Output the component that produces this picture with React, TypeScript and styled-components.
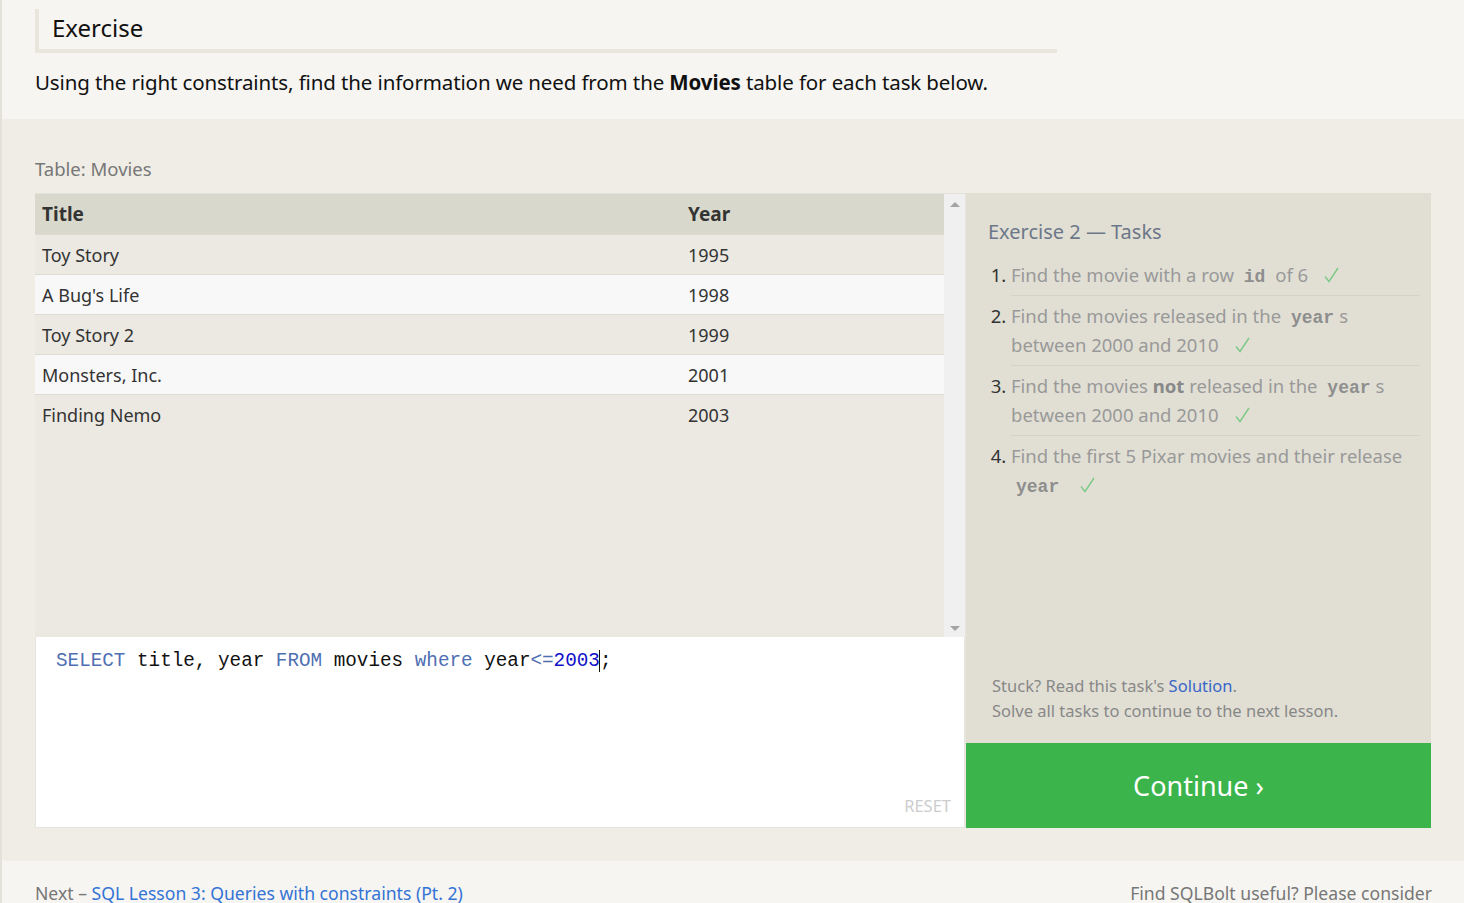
import React from 'react'
import styled, { createGlobalStyle } from 'styled-components'

const GlobalStyle = createGlobalStyle`
  html, body {
    margin: 0;
    padding: 0;
    background: #f6f5f1;
    font-family: "Noto Sans", "Open Sans", sans-serif;
    color: #111;
    overflow: hidden;
  }
`

const Page = styled.div`
  border-left: 2px solid #e4e0da;
  min-height: 903px;
  box-sizing: border-box;
`

const Intro = styled.section`
  padding: 9px 0 0 33px;
`

const HeaderBox = styled.div`
  width: 1022px;
  box-sizing: border-box;
  border-left: 4px solid #e9e7dd;
  border-bottom: 4px solid #e9e7dd;
  padding: 4px 0 6px 13px;
  font-size: 24px;
  line-height: 30px;
  color: #111;
`

const Lead = styled.p`
  margin: 14px 0 0;
  font-size: 20.5px;
  line-height: 30px;
  padding-bottom: 22px;
  letter-spacing: -0.12px;
  b {
    font-weight: 700;
  }
`

const ExerciseArea = styled.section`
  background: #efede6;
  border-bottom-left-radius: 4px;
  padding: 36px 0 33px 33px;
`

const TableLabel = styled.div`
  font-size: 18.5px;
  color: #777;
  line-height: 28px;
  margin-bottom: 10px;
`

const Workspace = styled.div`
  display: grid;
  grid-template-columns: 930px 466px;
  width: 1396px;
`

const LeftCol = styled.div`
  display: flex;
  flex-direction: column;
`

const TableWrap = styled.div`
  display: flex;
  height: 443px;
  background: #ebe9e2;
  border-top: 1px solid #e3e1da;
`

const TableScroll = styled.div`
  flex: 1;
  overflow: hidden;
`

const Table = styled.table`
  width: 100%;
  border-collapse: collapse;
  font-size: 18px;
  color: #333;
`

const HeadCell = styled.th`
  background: #d9d8cc;
  text-align: left;
  font-weight: 700;
  font-size: 19px;
  height: 40px;
  padding: 0 7px;
  color: #333;
`

const Row = styled.tr<{ $alt: boolean }>`
  background: ${p => (p.$alt ? '#f8f8f8' : '#ebe9e2')};
  border-top: 1px solid #dcdbd6;
`

const Cell = styled.td<{ $w?: string }>`
  height: 39px;
  padding: 0 7px;
  width: ${p => p.$w || 'auto'};
`

const Scrollbar = styled.div`
  width: 21px;
  background: #f0f0f0;
  display: flex;
  flex-direction: column;
  justify-content: space-between;
  align-items: center;
  padding: 8px 0 6px;
  box-sizing: border-box;
`

const Arrow = styled.div<{ $down?: boolean }>`
  width: 0;
  height: 0;
  border-left: 5px solid transparent;
  border-right: 5px solid transparent;
  ${p =>
    p.$down
      ? 'border-top: 5px solid #a3a3a3;'
      : 'border-bottom: 5px solid #a3a3a3;'}
`

const Editor = styled.div`
  height: 191px;
  background: #fff;
  border: 1px solid #e6e4de;
  border-top: none;
  box-sizing: border-box;
  display: flex;
  flex-direction: column;
  justify-content: space-between;
  padding: 11px 13px 10px 20px;
`

const Code = styled.div`
  font-family: "Liberation Mono", "DejaVu Sans Mono", monospace;
  font-size: 19.3px;
  line-height: 26px;
  color: #111;
  white-space: pre;
`

const Token = styled.span<{ $kind: 'kw' | 'num' | 'op' }>`
  color: ${p => (p.$kind === 'kw' ? '#4f6fb3' : p.$kind === 'num' ? '#1010c8' : '#4f6fb3')};
`

const Caret = styled.span`
  border-left: 1.5px solid #111;
  margin-left: -1px;
`

const Reset = styled.div`
  align-self: flex-end;
  font-size: 16.5px;
  color: #cdcdcd;
`

const RightCol = styled.div`
  display: flex;
  flex-direction: column;
  border-left: 1px solid #e8e6dd;
`

const TaskPanel = styled.div`
  flex: 1;
  background: #e1dfd4;
  padding: 24px 11px 20px 22px;
  display: flex;
  flex-direction: column;
  justify-content: space-between;
`

const TaskTitle = styled.h3`
  margin: 0 0 8px;
  font-weight: 400;
  font-size: 20px;
  line-height: 30px;
  color: #6c7789;
`

const TaskList = styled.ol`
  margin: 0;
  padding: 0 0 0 23px;
  font-size: 18.5px;
  line-height: 29.5px;
  color: #333;
`

const TaskItem = styled.li<{ $last?: boolean }>`
  padding: 5px 0 5px;
  border-bottom: ${p => (p.$last ? 'none' : '1px solid #d5d3c8')};
  span.t {
    color: #999;
  }
  b {
    color: #888;
  }
`

const Mono = styled.code`
  font-family: "Liberation Mono", "DejaVu Sans Mono", monospace;
  font-weight: 700;
  color: #8e8e8e;
  font-size: 18px;
  line-height: 1;
  padding: 0 5px;
`

const CheckMark = styled.svg`
  width: 15px;
  height: 16px;
  margin-left: 16px;
  vertical-align: -1px;
`

const Check = () => (
  <CheckMark viewBox="0 0 15 16">
    <path d="M1 9.5 L5 14.5 L14 1" fill="none" stroke="#7cc985" strokeWidth="1.4" />
  </CheckMark>
)

const Hint = styled.div`
  font-size: 16.5px;
  line-height: 25px;
  color: #888;
  padding-left: 4px;
  a {
    color: #3a66c8;
    text-decoration: none;
  }
`

const ContinueButton = styled.button`
  height: 85px;
  border: none;
  background: #3bb44b;
  color: #fff;
  font-family: "Noto Sans", "Open Sans", sans-serif;
  font-size: 27px;
  cursor: pointer;
  padding: 0;
`

const Footer = styled.footer`
  display: flex;
  justify-content: space-between;
  padding: 20px 32px 0 33px;
  font-size: 17.6px;
  color: #777;
  a {
    color: #3473d6;
    text-decoration: none;
  }
`

const movies = [
  { title: 'Toy Story', year: 1995 },
  { title: "A Bug's Life", year: 1998 },
  { title: 'Toy Story 2', year: 1999 },
  { title: 'Monsters, Inc.', year: 2001 },
  { title: 'Finding Nemo', year: 2003 },
]

export default function App() {
  return (
    <Page>
      <GlobalStyle />
      <Intro>
        <HeaderBox>Exercise</HeaderBox>
        <Lead>
          Using the right constraints, find the information we need from the <b>Movies</b> table
          for each task below.
        </Lead>
      </Intro>
      <ExerciseArea>
        <TableLabel>Table: Movies</TableLabel>
        <Workspace>
          <LeftCol>
            <TableWrap>
              <TableScroll>
                <Table>
                  <thead>
                    <tr>
                      <HeadCell>Title</HeadCell>
                      <HeadCell>Year</HeadCell>
                    </tr>
                  </thead>
                  <tbody>
                    {movies.map((m, i) => (
                      <Row key={m.title} $alt={i % 2 === 1}>
                        <Cell $w="632px">{m.title}</Cell>
                        <Cell>{m.year}</Cell>
                      </Row>
                    ))}
                  </tbody>
                </Table>
              </TableScroll>
              <Scrollbar>
                <Arrow />
                <Arrow $down />
              </Scrollbar>
            </TableWrap>
            <Editor>
              <Code>
                <Token $kind="kw">SELECT</Token> title, year <Token $kind="kw">FROM</Token> movies{' '}
                <Token $kind="kw">where</Token> year<Token $kind="op">&lt;=</Token>
                <Token $kind="num">2003</Token>
                <Caret />;
              </Code>
              <Reset>RESET</Reset>
            </Editor>
          </LeftCol>
          <RightCol>
            <TaskPanel>
              <div>
                <TaskTitle>Exercise 2 — Tasks</TaskTitle>
                <TaskList>
                  <TaskItem>
                    <span className="t">
                      Find the movie with a row <Mono>id</Mono> of 6
                      <Check />
                    </span>
                  </TaskItem>
                  <TaskItem>
                    <span className="t">
                      Find the movies released in the <Mono>year</Mono>s between 2000 and 2010
                      <Check />
                    </span>
                  </TaskItem>
                  <TaskItem>
                    <span className="t">
                      Find the movies <b>not</b> released in the <Mono>year</Mono>s between 2000 and
                      2010
                      <Check />
                    </span>
                  </TaskItem>
                  <TaskItem $last>
                    <span className="t">
                      Find the first 5 Pixar movies and their release <Mono>year</Mono>
                      <Check />
                    </span>
                  </TaskItem>
                </TaskList>
              </div>
              <Hint>
                Stuck? Read this task's <a href="#">Solution</a>.
                <br />
                Solve all tasks to continue to the next lesson.
              </Hint>
            </TaskPanel>
            <ContinueButton>Continue ›</ContinueButton>
          </RightCol>
        </Workspace>
      </ExerciseArea>
      <Footer>
        <div>
          Next – <a href="#">SQL Lesson 3: Queries with constraints (Pt. 2)</a>
        </div>
        <div>Find SQLBolt useful? Please consider</div>
      </Footer>
    </Page>
  )
}
